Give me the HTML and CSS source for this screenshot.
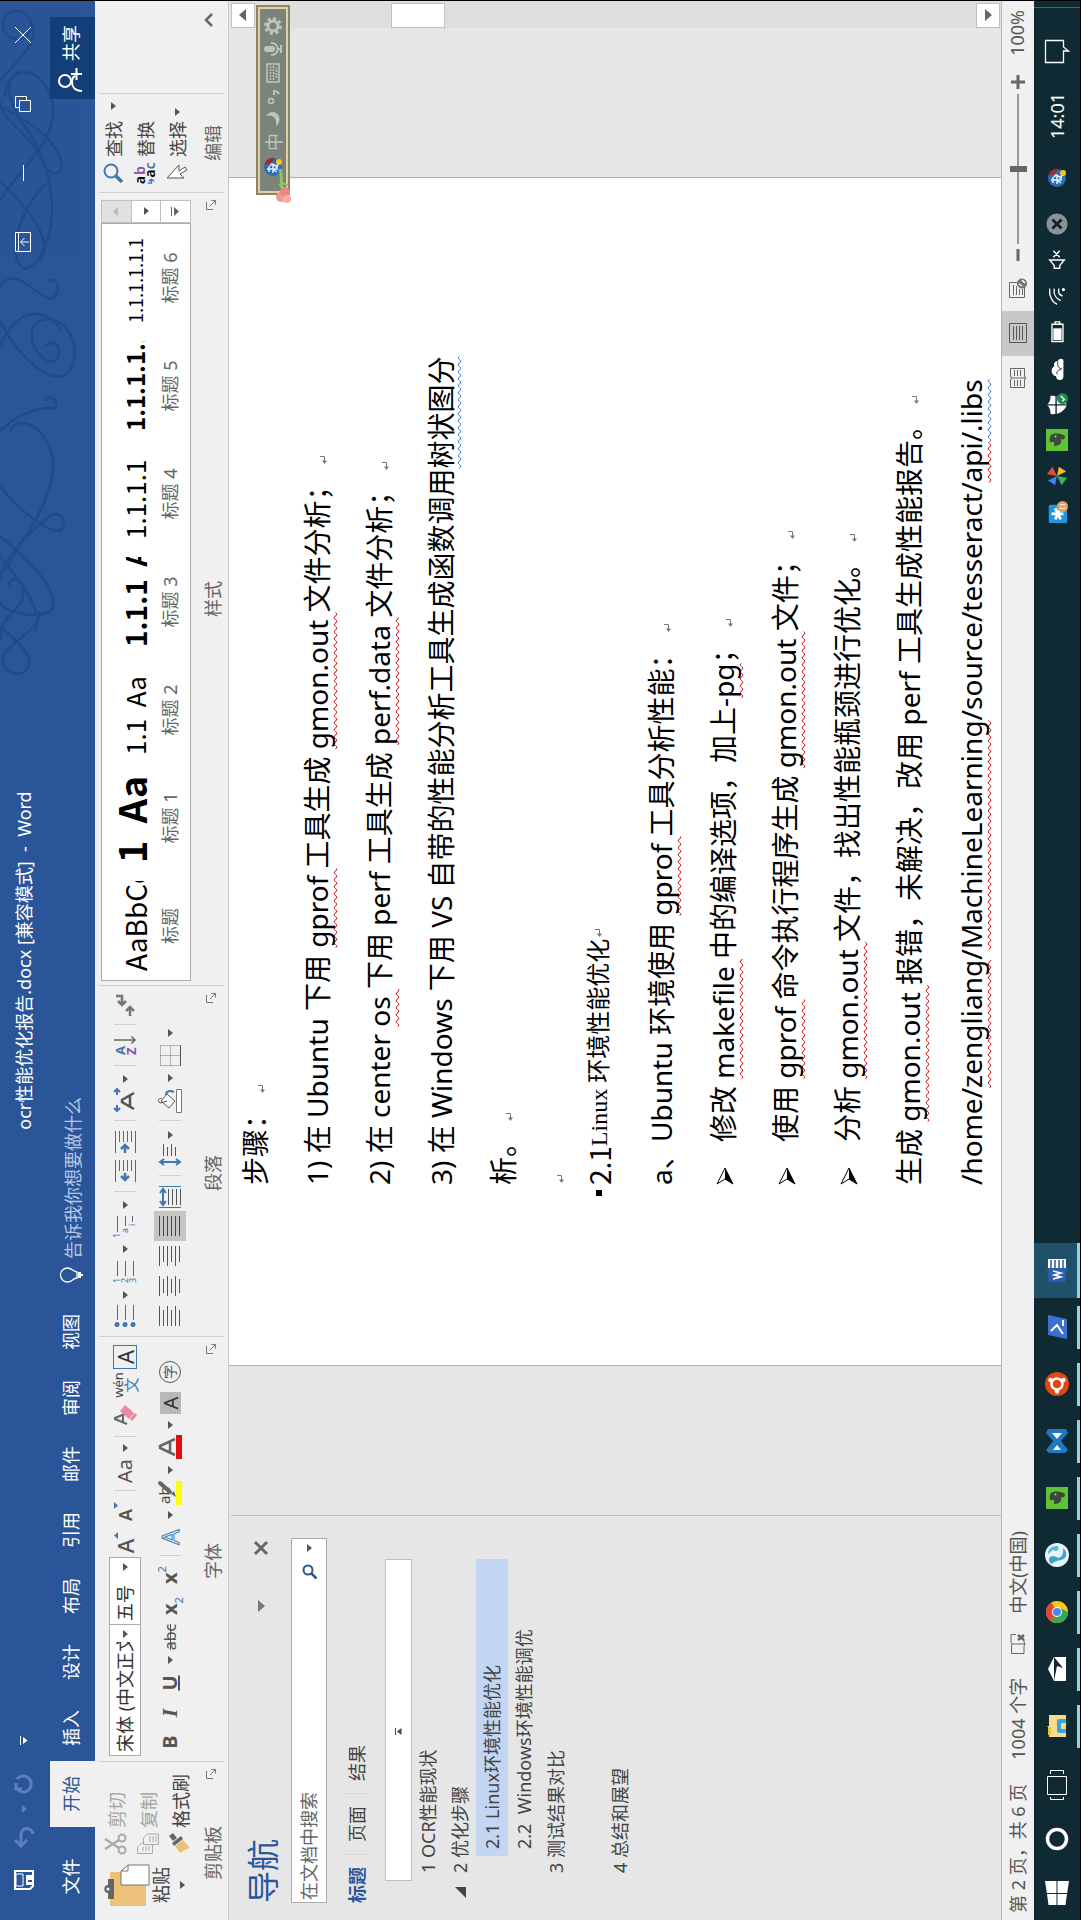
FILE: index.html
```html
<!DOCTYPE html>
<html lang="zh-CN">
<head>
<meta charset="utf-8">
<title>ocr性能优化报告.docx [兼容模式] - Word</title>
<link rel="stylesheet" href="styles.css">
</head>
<body>
<svg class="defs" aria-hidden="true">
  <symbol id="launch" viewBox="0 0 10 10"><path d="M.5 7V.5H8M4 4l5 5M9.500 5.500v4h-4" fill="none" stroke="#777"/></symbol>
  <symbol id="ret" viewBox="0 0 8 8"><path d="M7.500 0v4.500H2" fill="none" stroke="#777"/><path d="M0 4.500 3.500 2v5z" fill="#777"/></symbol>
  <symbol id="arrowhead" viewBox="0 0 18 18"><path d="M1 1 17 9 1 17 6 9z" fill="#fff" stroke="#000"/><path d="M6 9h11L1 17z"/></symbol>
  <symbol id="evernote" viewBox="0 0 22 22"><rect width="22" height="22" fill="#5fc33a"/><path d="M5 8h4V4c3-1 8 0 8 3 1 5 0 10-2 12-3 0-4-1-3-4-4 1-7-1-7-7z" fill="#3b4a3b"/><circle cx="14.500" cy="9.500" r="1" fill="#9fdc80"/></symbol>
  <symbol id="sogou" viewBox="0 0 20 20"><circle cx="10" cy="10" r="9" fill="#2d6db5"/><path d="M12 2c5 0 8 5 7 9l-4-2z" fill="#b3202a"/><circle cx="15" cy="16" r="3" fill="#f4c61c"/><path d="M5 6h6M8 4v11M4 10h8M5 14l2-3M11 7l2 2-3 6M9 13l4 2" stroke="#e4f2ff" fill="none" stroke-width="1.500"/></symbol>
</svg>
<div class="screen">
  <header class="titlebar">
    <svg class="swirls" viewBox="0 0 680 95" aria-hidden="true">
      <g transform="matrix(0 1 -1 0 680 0)" fill="none" stroke="#1f4783" stroke-width="2.500" opacity=".75">
        <circle cx="17" cy="24" r="14"/>
        <path d="M28 15C45 40 20 55 0 80M5 95C8 62 40 62 52 100 60 140 20 165 0 200M0 105C30 120 60 140 62 165 60 180 45 170 42 160 30 130 0 120 0 100"/>
        <path d="M20 72C5 75 5 100 25 125 50 160 60 210 45 245 35 270 20 275 16 255 14 225 30 195 50 180"/>
        <path d="M0 180C30 210 55 240 40 260M0 285C15 265 30 290 50 298 62 295 60 275 48 280M0 320C15 350 50 390 70 370 85 340 60 310 40 320 20 330 40 365 55 360 65 350 55 335 45 345"/>
        <path d="M0 430C20 410 45 405 55 408 60 400 50 392 45 400M10 430C20 410 50 430 53 460 55 500 20 540 5 570M0 345C20 300 50 310 62 330"/>
        <path d="M0 485C20 510 45 530 60 530 68 522 62 508 50 515 30 530 0 560 0 580M0 535C30 560 60 590 52 608 45 620 0 612 0 600"/>
        <path d="M0 555C20 580 45 610 35 630M8 585C15 570 28 580 22 600 10 615 0 620 0 640M0 625C10 635 32 650 29 665 22 680 0 672 3 655 10 640 40 630 40 610"/>
      </g>
    </svg>
    <div class="quick">
      <button class="tb save" aria-label="保存"><svg width="20" height="20" viewBox="0 0 20 20"><path d="M1 1h18v18H4l-3-3z" fill="none" stroke="#fff" stroke-width="2"/><path d="M4 2h12v7H4z" fill="#2a5699" stroke="#fff"/><path d="M5 12h10v7H5z" fill="#fff"/><path d="M8 14h2v4H8z" fill="#2a5699"/></svg></button>
      <button class="tb undo" aria-label="撤消"><svg width="22" height="20" viewBox="0 0 22 20"><path d="M8 1 2 7l6 6M2 7h11c8 0 9 10 1 12" fill="none" stroke="#5c80bb" stroke-width="3"/></svg></button>
      <i class="caret dim"></i>
      <button class="tb redo" aria-label="重做"><svg width="20" height="20" viewBox="0 0 20 20"><path d="M4 3a8 8 0 1 0 10 0M4 8V2h6" fill="none" stroke="#5c80bb" stroke-width="3"/></svg></button>
      <button class="tb" aria-label="自定义"><svg width="9" height="8" viewBox="0 0 9 8"><path d="M0 .5h9" stroke="#fff"/><path d="M1 3h7L4.500 7.500z" fill="#fff"/></svg></button>
    </div>
    <h1 class="doc-title">ocr性能优化报告.docx [兼容模式]&nbsp; -&nbsp; Word</h1>
    <div class="winbtns">
      <button class="wb" aria-label="功能区显示选项"><svg width="20" height="16" viewBox="0 0 20 16" fill="none" stroke="#fff"><path d="M.5.500h19v15H.5zM.5 3.500h19M10 14V6M6 9.500 10 5.500l4 4"/></svg></button>
      <button class="wb" aria-label="最小化"><svg width="16" height="16" viewBox="0 0 16 16"><path d="M0 8.500h16" stroke="#fff"/></svg></button>
      <button class="wb" aria-label="还原"><svg width="16" height="16" viewBox="0 0 16 16" fill="none" stroke="#fff"><path d="M.5 4.500h11v11H.5zM4.500 4V.500h11v11H12"/></svg></button>
      <button class="wb" aria-label="关闭"><svg width="16" height="16" viewBox="0 0 16 16"><path d="m0 0 16 16M16 0 0 16" stroke="#fff"/></svg></button>
    </div>
  </header>
  <nav class="tabs">
    <button class="tab file">文件</button><button class="tab on">开始</button><button class="tab">插入</button><button class="tab">设计</button><button class="tab">布局</button><button class="tab">引用</button><button class="tab">邮件</button><button class="tab">审阅</button><button class="tab">视图</button>
    <button class="tell"><svg width="16" height="23" viewBox="0 0 16 23"><path d="M5 17c0-4-4-5-4-9.500a7 7 0 0 1 14 0C15 12 11 13 11 17z" fill="none" stroke="#fff" stroke-width="1.300"/><path d="M5 18h6v3H9v2H7v-2H5z" fill="#fff"/></svg>告诉我你想要做什么</button>
    <button class="share"><svg width="24" height="24" viewBox="0 0 24 24" fill="none" stroke="#fff" stroke-width="2"><circle cx="11" cy="7" r="6"/><path d="M1 24c0-7 4-10 9-10 3 0 5 1 6 3M18 13v11M12 18.500h12"/></svg>共享</button>
  </nav>

  <div class="ribbon">
    <section class="group clip">
      <div class="clip-body">
        <button class="paste"><svg width="42" height="46" viewBox="0 0 42 46"><path d="M0 6h34v36H0z" fill="#ecc27b"/><path d="M7 10V4h6c0-5 8-5 8 0h6v6z" fill="#666"/><circle cx="17" cy="4" r="1.500" fill="#fff"/><path d="M21 17h14l6 7v21H21z" fill="#fff" stroke="#777"/><path d="M35 17v7h6" fill="none" stroke="#777"/></svg><span>粘贴</span><i class="caret"></i></button>
        <div class="clip-list">
          <button class="row off"><svg width="22" height="22" viewBox="0 0 22 22" fill="none" stroke="#aaa" stroke-width="2"><circle cx="5" cy="17" r="3.500"/><circle cx="17" cy="17" r="3.500"/><path d="m7 14 9-14M15 14 6 0" stroke-width="2.500"/></svg>剪切</button>
          <button class="row off"><svg width="22" height="22" viewBox="0 0 22 22" fill="#f0f0f0" stroke="#aaa"><path d="M1.500.5H8l4 4v11H1.500z"/><path d="M10.500 6.500H17l4 4v11H10.500zM13 13h6M13 16h6M13 19h6M4 6h4M4 9h5M4 12h5"/></svg>复制</button>
          <button class="row"><svg width="22" height="22" viewBox="0 0 22 22"><path d="m2 11 7-5 6 8-8 7c-1-4-3-7-5-10z" fill="#ecc27b"/><path d="m9 5 3-2 7 9-3 2zM14 4l5-4 3 4-5 4z" fill="#666"/></svg>格式刷</button>
        </div>
      </div>
      <footer class="gfoot"><span>剪贴板</span><svg class="launch"><use href="#launch"/></svg></footer>
    </section>

    <section class="group font">
      <div class="gbody">
        <div class="tools">
          <label class="combo name"><select aria-label="字体"><option>宋体 (中文正文)</option></select><i class="caret"></i></label>
          <label class="combo size"><select aria-label="字号"><option>五号</option></select><i class="caret"></i></label>
          <button class="t w30"><b class="gl a22">A</b><svg width="8" height="6"><path d="M0 5 3.500 1 7 5z" fill="#3f78b0"/></svg></button>
          <button class="t w32"><b class="gl a18">A</b><svg width="8" height="6"><path d="M0 1 3.500 5 7 1z" fill="#3f78b0"/></svg></button>
          <i class="sep w8"></i>
          <button class="t w32"><span class="gl a20">Aa</span></button><i class="caret w14"></i>
          <i class="sep w8"></i>
          <button class="t w36"><svg width="20" height="22" viewBox="0 0 20 22"><path d="m1 13 5-12h1l5 12M3 9h7" fill="none" stroke="#666" stroke-width="2"/><path d="m6 15 8-9 6 5-8 9z" fill="#e88aa0"/><path d="m5 17 6 5" stroke="#e88aa0" stroke-width="3"/></svg></button>
          <button class="t w24 pinyin"><span>wén</span><span class="blue">文</span></button>
          <button class="t w32"><span class="gl boxed">A</span></button>
        </div>
        <div class="tools">
          <button class="t w28"><b class="gl a20">B</b></button>
          <button class="t w30"><b class="gl ital">I</b></button>
          <button class="t w30"><b class="gl under">U</b></button><i class="caret w16"></i>
          <button class="t w30"><s class="gl abc">abc</s></button>
          <button class="t w32"><b class="gl a20">x</b><span class="mini low">2</span></button>
          <button class="t w30"><b class="gl a20">x</b><span class="mini high">2</span></button>
          <i class="sep w8"></i>
          <button class="t w30"><span class="gl outline">A</span></button><i class="caret w14"></i>
          <button class="t w30"><svg width="24" height="24" viewBox="0 0 24 24"><path d="M0 18h24v6H0z" fill="#ff0"/><text x="1" y="12" class="hl">ab</text><path d="m22 2-9 10" stroke="#666" stroke-width="4" stroke-linecap="round"/><path d="m11 13 3 3-6 2z" fill="#666"/></svg></button><i class="caret w16"></i>
          <button class="t w30"><svg width="24" height="24" viewBox="0 0 24 24"><path d="m4 17 7-15h2l7 15M7 12h10" fill="none" stroke="#666" stroke-width="2.500"/><path d="M0 18h24v6H0z" fill="#e01010"/></svg></button><i class="caret w14"></i>
          <button class="t w30"><span class="gl shade">A</span></button>
          <button class="t w32"><span class="gl ring">字</span></button>
        </div>
      </div>
      <footer class="gfoot"><span>字体</span><svg class="launch"><use href="#launch"/></svg></footer>
    </section>

    <section class="group para">
      <div class="gbody">
        <div class="tools">
          <button class="t w30"><svg width="22" height="22" viewBox="0 0 22 22"><g fill="#3f78b0"><circle cx="2.500" cy="3" r="2.500"/><circle cx="2.500" cy="11" r="2.500"/><circle cx="2.500" cy="19" r="2.500"/></g><path d="M7 3.500h15M7 11.500h15M7 19.500h15" stroke="#666"/></svg></button><i class="caret w12"></i>
          <button class="t w34"><svg width="22" height="22" viewBox="0 0 22 22"><g class="num"><text x="0" y="6">1</text><text x="0" y="14">2</text><text x="0" y="22">3</text></g><path d="M7 3.500h15M7 11.500h15M7 19.500h15" stroke="#666"/></svg></button><i class="caret w12"></i>
          <button class="t w32"><svg width="22" height="22" viewBox="0 0 22 22"><g class="num"><text x="0" y="6">1</text><text x="5" y="14">a</text><text x="12" y="21">i</text></g><path d="M6 3.500h16M12 11.500h10M16 18.500h6" stroke="#666"/></svg></button><i class="caret w12"></i>
          <i class="sep w14"></i>
          <button class="t w28"><svg width="22" height="22" viewBox="0 0 22 22"><path d="M0 1.500h22M11 5.500h11M11 9.500h11M11 13.500h11M11 17.500h11M0 21.500h22" stroke="#666"/><path d="M9 11H2M6 7l-4 4 4 4" fill="none" stroke="#3f78b0" stroke-width="2.500"/></svg></button>
          <button class="t w30"><svg width="22" height="22" viewBox="0 0 22 22"><path d="M0 1.500h22M11 5.500h11M11 9.500h11M11 13.500h11M11 17.500h11M0 21.500h22" stroke="#666"/><path d="M0 11h7M4 7l4 4-4 4" fill="none" stroke="#3f78b0" stroke-width="2.500"/></svg></button>
          <i class="sep w12"></i>
          <button class="t w30"><svg width="24" height="22" viewBox="0 0 24 22"><path d="M7 3H1M4 0 1 3l3 3M17 3h6M20 0l3 3-3 3" fill="none" stroke="#3f78b0" stroke-width="2"/><path d="m3 20 7-12h2l7 12M6 16h10" fill="none" stroke="#555" stroke-width="2.500"/></svg></button><i class="caret w12"></i>
          <i class="sep w14"></i>
          <button class="t w28"><svg width="20" height="22" viewBox="0 0 20 22"><text x="0" y="11" class="az" fill="#3f78b0">A</text><text x="0" y="22" class="az" fill="#8a4fa8">Z</text><path d="M15 0v21M11.500 17.500 15 21l3.500-3.500" fill="none" stroke="#666" stroke-width="1.500"/></svg></button>
          <i class="sep w12"></i>
          <button class="t w28"><svg width="22" height="20" viewBox="0 0 22 20" fill="none" stroke="#777" stroke-width="2.500"><path d="M20 1v6h-8M15 3l-4 4 4 4M0 15h9M5 11l4 4-4 4"/></svg></button>
        </div>
        <div class="tools">
          <button class="t w30"><svg width="20" height="22" viewBox="0 0 20 22"><path d="M0 .5h20M0 4.500h16M0 8.500h20M0 12.500h16M0 16.500h20M0 20.500h16" stroke="#555"/></svg></button>
          <button class="t w30"><svg width="20" height="22" viewBox="0 0 20 22"><path d="M0 .5h20M3 4.500h14M0 8.500h20M3 12.500h14M0 16.500h20M3 20.500h14" stroke="#555"/></svg></button>
          <button class="t w30"><svg width="20" height="22" viewBox="0 0 20 22"><path d="M0 .5h20M4 4.500h16M0 8.500h20M4 12.500h16M0 16.500h20M4 20.500h16" stroke="#555"/></svg></button>
          <button class="t w30 pressed"><svg width="20" height="22" viewBox="0 0 20 22"><path d="M0 .5h20M0 4.500h20M0 8.500h20M0 12.500h20M0 16.500h20M0 20.500h20" stroke="#444"/></svg></button>
          <button class="t w28"><svg width="22" height="22" viewBox="0 0 22 22"><path d="M.5 0v22M21.500 0v22" stroke="#3f78b0"/><path d="M3 9.500h16M3 13.500h16M3 17.500h16M3 21.500h16" stroke="#555"/><path d="M4 4h14M7 1 3 4l4 3M15 1l4 3-4 3" fill="none" stroke="#3f78b0" stroke-width="2"/></svg></button>
          <i class="sep w14"></i>
          <button class="t w28"><svg width="22" height="22" viewBox="0 0 22 22"><path d="M4 2v18M1 5l3-4 3 4M1 17l3 4 3-4" fill="none" stroke="#3f78b0" stroke-width="2"/><path d="M10 4.500h12M10 8.500h9M10 12.500h12M10 16.500h9" stroke="#555"/></svg></button><i class="caret w12"></i>
          <i class="sep w16"></i>
          <button class="t w24"><svg width="24" height="24" viewBox="0 0 24 24"><path d="M.5 18.500h23v5H.5z" fill="#fff" stroke="#777"/><path d="m5 11 7-8 7 6-7 8zM12 9 10 2c2-3 6-1 4 2" fill="#fff" stroke="#555"/><path d="M18 8c4 0 5 4 3 8" fill="none" stroke="#3f78b0" stroke-width="2"/></svg></button><i class="caret w22"></i>
          <button class="t w22"><svg width="21" height="21" viewBox="0 0 21 21"><path d="M.5.500h20v20M.5.500v20M10.500.500v20M.5 10.500h20" fill="none" stroke="#777" stroke-dasharray="1 1"/><path d="M0 20.500h21" stroke="#555"/></svg></button><i class="caret w24"></i>
        </div>
      </div>
      <footer class="gfoot"><span>段落</span><svg class="launch"><use href="#launch"/></svg></footer>
    </section>

    <section class="group styles">
      <div class="gallery">
        <div class="cells">
          <button class="cell"><span class="smp s28">AaBbCc</span><span>标题</span></button>
          <button class="cell"><b class="smp s38">1&nbsp; Aa</b><span>标题 1</span></button>
          <button class="cell"><span class="smp s26">1.1&nbsp; Aa</span><span>标题 2</span></button>
          <button class="cell"><b class="smp s28">1.1.1&nbsp; A</b><span>标题 3</span></button>
          <button class="cell"><span class="smp s26">1.1.1.1</span><span>标题 4</span></button>
          <button class="cell"><b class="smp s24">1.1.1.1.1</b><span>标题 5</span></button>
          <button class="cell"><span class="smp s18">1.1.1.1.1.1</span><span>标题 6</span></button>
        </div>
        <div class="gscroll">
          <button class="gs dis" aria-label="上"><svg width="9" height="6"><path d="M0 5h9L4.500 0z" fill="#bbb"/></svg></button>
          <button class="gs" aria-label="下"><i class="caret"></i></button>
          <button class="gs" aria-label="更多"><svg width="9" height="9"><path d="M0 .5h9" stroke="#666"/><path d="M0 3h9L4.500 8z" fill="#666"/></svg></button>
        </div>
      </div>
      <footer class="gfoot"><span>样式</span><svg class="launch"><use href="#launch"/></svg></footer>
    </section>

    <section class="group edit">
      <div class="edit-list">
        <button class="row"><svg width="22" height="22" viewBox="0 0 22 22" fill="none" stroke="#3f78b0"><circle cx="13" cy="9" r="6.500" stroke-width="2"/><path d="m8 14-6 6" stroke-width="3.500"/></svg>查找<i class="caret far"></i></button>
        <button class="row"><svg width="24" height="24" viewBox="0 0 24 24"><text x="0" y="12" class="rp">a</text><text x="10" y="12" class="rp" fill="#8a4fa8">b</text><text x="7" y="23" class="rp">a</text><text x="16" y="23" class="rp" fill="#3f78b0">c</text><path d="M1 15v4h4M3 16l2 3-2 3" fill="none" stroke="#3f78b0" stroke-width="1.500"/></svg>替换</button>
        <button class="row"><svg width="22" height="22" viewBox="0 0 22 22"><path d="M6 1v17l4-4 4 7 3-2-4-6h6z" fill="#fff" stroke="#555"/></svg>选择<i class="caret"></i></button>
      </div>
      <footer class="gfoot"><span>编辑</span></footer>
    </section>
    <div class="rest"><button class="t" aria-label="折叠功能区"><svg width="14" height="9" viewBox="0 0 14 9"><path d="m1 8 6-6 6 6" fill="none" stroke="#666" stroke-width="2.500"/></svg></button></div>
  </div>

  <div class="work">
    <aside class="nav">
      <header class="nav-head"><h2>导航</h2><i class="caret big"></i><button class="t" aria-label="关闭"><svg width="14" height="14" viewBox="0 0 14 14"><path d="m1 1 12 12M13 1 1 13" stroke="#666" stroke-width="3"/></svg></button></header>
      <label class="search"><input type="text" placeholder="在文档中搜索" aria-label="在文档中搜索"><svg width="15" height="15" viewBox="0 0 15 15" fill="none" stroke="#2a5699"><circle cx="9" cy="6" r="4.500" stroke-width="2"/><path d="m5.500 9.500-5 5" stroke-width="2.500"/></svg><i class="caret"></i></label>
      <div class="nav-tabs"><button class="on">标题</button><button>页面</button><button>结果</button></div>
      <button class="jump" aria-label="跳转到文档开头"><svg width="7" height="7"><path d="M0 .5h7" stroke="#444"/><path d="M0 6.500h7L3.500 2z" fill="#444"/></svg></button>
      <ul class="tree">
        <li><a href="#a">1 OCR性能现状</a></li>
        <li class="open"><svg width="11" height="11"><path d="M11 0v11H0z" fill="#444"/></svg><a href="#a">2 优化步骤</a></li>
        <li class="sub sel"><a href="#a">2.1 Linux环境性能优化</a></li>
        <li class="sub"><a href="#a">2.2&nbsp; Windows环境性能调优</a></li>
        <li><a href="#a">3 测试结果对比</a></li>
        <li></li>
        <li><a href="#a">4 总结和展望</a></li>
      </ul>
    </aside>
    <main class="canvas">
      <article class="page">
        <p>步骤<span class="pu">：</span><svg class="ret"><use href="#ret"/></svg></p>
        <p>1) 在 Ubuntu 下用 <u>gprof </u>工具生成 <u>gmon.out </u>文件分析<span class="pu">；</span><svg class="ret"><use href="#ret"/></svg></p>
        <p>2) 在 center <u>os </u>下用 perf 工具生成 <u>perf.data </u>文件分析<span class="pu">；</span><svg class="ret"><use href="#ret"/></svg></p>
        <p>3) 在 Windows 下用 VS 自带的性能分析工具生成函数调用<u class="gr">树状图分</u></p>
        <p>析。<svg class="ret"><use href="#ret"/></svg></p>
        <p class="blank"><svg class="ret"><use href="#ret"/></svg></p>
        <h3 id="a"><i class="dot"></i><span class="hn">2.1</span>Linux 环境性能优化<svg class="ret"><use href="#ret"/></svg></h3>
        <p><span class="mk">a、</span>Ubuntu 环境使用 <u>gprof </u>工具分析性能<span class="pu">：</span><svg class="ret"><use href="#ret"/></svg></p>
        <p><span class="mk"><svg width="18" height="18"><use href="#arrowhead"/></svg></span>修改 <u>makefile </u>中的编译选项<span class="pc">，</span>加上-<u>pg</u><span class="pu">；</span><svg class="ret"><use href="#ret"/></svg></p>
        <p><span class="mk"><svg width="18" height="18"><use href="#arrowhead"/></svg></span>使用 <u>gprof </u>命令执行程序生成 <u>gmon.out </u>文件<span class="pu">；</span><svg class="ret"><use href="#ret"/></svg></p>
        <p><span class="mk"><svg width="18" height="18"><use href="#arrowhead"/></svg></span>分析 <u>gmon.out </u>文件<span class="pc">，</span>找出性能瓶颈进行优化。<svg class="ret"><use href="#ret"/></svg></p>
        <p>生成 <u>gmon.out </u>报错<span class="pc">，</span>未解决<span class="pc">，</span>改用 perf 工具生成性能报告。<svg class="ret"><use href="#ret"/></svg></p>
        <p>/home/<u>zengliang</u>/<u>MachineLearning</u>/source/tesseract/<u>api</u><u class="gr">/.libs</u></p>
      </article>
    </main>
    <div class="vscroll">
      <button aria-label="向上滚动"><svg width="12" height="8"><path d="M0 7h12L6 0z" fill="#666"/></svg></button>
      <i class="thumb"></i>
      <button aria-label="向下滚动"><svg width="12" height="8"><path d="M0 1h12L6 8z" fill="#666"/></svg></button>
    </div>
    <div class="ime">
      <svg width="20" height="20"><use href="#sogou"/></svg>
      <span>中</span>
      <svg width="16" height="16" viewBox="0 0 16 16"><path d="M11 1c2 7-2 11-10 10 3 5 13 5 14-3 0-3-2-6-4-7z" fill="#bfc5bd"/></svg>
      <svg width="16" height="16" viewBox="0 0 16 16"><circle cx="4" cy="6" r="2.500" fill="none" stroke="#bfc5bd" stroke-width="1.500"/><path d="M10 9h4c0 3-1 4-3 5" fill="none" stroke="#bfc5bd" stroke-width="2"/></svg>
      <svg width="20" height="14" viewBox="0 0 20 14"><path d="M1 1h18v12H1z" fill="none" stroke="#bfc5bd" stroke-width="1.500"/><path d="M3 4.500h14M3 7.500h14M5 10.500h10" stroke="#bfc5bd" stroke-width="1.500" stroke-dasharray="2 1"/></svg>
      <svg width="16" height="18" viewBox="0 0 16 18"><rect x="5" width="6" height="11" rx="3" fill="#bfc5bd"/><path d="M2 7c0 9 12 9 12 0M8 14v3M4 17h8" fill="none" stroke="#bfc5bd" stroke-width="2"/></svg>
      <svg width="18" height="18" viewBox="0 0 18 18"><circle cx="9" cy="9" r="5" fill="none" stroke="#bfc5bd" stroke-width="3"/><circle cx="9" cy="9" r="7.500" fill="none" stroke="#bfc5bd" stroke-width="3" stroke-dasharray="3 2.900"/></svg>
      <svg class="flower" width="34" height="18" viewBox="0 0 34 18"><path d="M12 8c6-3 12 0 22-3" fill="none" stroke="#8cc46a" stroke-width="3"/><path d="m14 10 5-6M18 13l2-6" stroke="#8cc46a" stroke-width="2"/><circle cx="6" cy="6" r="5" fill="#ef9a90"/><circle cx="11" cy="10" r="5" fill="#e98880"/><circle cx="4" cy="12" r="4" fill="#f4aca4"/></svg>
    </div>
  </div>

  <footer class="status">
    <span class="pg">第 2 页<span class="pc">，</span>共 6 页</span><span class="wc">1004 个字</span>
    <svg class="book" width="20" height="18" viewBox="0 0 20 18" fill="none" stroke="#666"><path d="M10 3v13l-2-1H.5V2.500H8zM10 3l2-1h7.500v5M10 16l2-1h2"/><path d="m14 9 5 6M19 9l-5 6" stroke-width="2.500"/></svg>
    <span>中文(中国)</span>
    <div class="views">
      <button aria-label="阅读视图"><svg width="20" height="18" viewBox="0 0 20 18" fill="none" stroke="#666"><path d="M.5 1.500H8l2 1 2-1h7.500v14H12l-2 1-2-1H.5zM10 2v15M2 5.500h6M2 8.500h6M2 11.500h6M12 5.500h6M12 8.500h6M12 11.500h6"/></svg></button>
      <button class="cur" aria-label="页面视图"><svg width="20" height="18" viewBox="0 0 20 18" fill="none" stroke="#555"><path d="M.5.500h19v17H.5zM3 4.500h14M3 7.500h14M3 10.500h14M3 13.500h14"/></svg></button>
      <button aria-label="Web 版式视图"><svg width="20" height="18" viewBox="0 0 20 18" fill="none" stroke="#666"><path d="M12 15.500H.5V.500h15V8M3 4.500h10M3 7.500h9M3 10.500h6M3 13.500h6"/><circle cx="14.500" cy="13" r="4.500" fill="#777"/><path d="m12 13 2-3M15 16l3-3" stroke="#fff" stroke-width="1.500"/></svg></button>
    </div>
    <button class="zb" aria-label="缩小"><svg width="12" height="4"><path d="M0 2h12" stroke="#666" stroke-width="3"/></svg></button>
    <input type="range" class="zoom" min="0" max="100" value="50" aria-label="缩放">
    <button class="zb" aria-label="放大"><svg width="14" height="14"><path d="M0 7h14M7 0v14" stroke="#666" stroke-width="3"/></svg></button>
    <span class="pct">100%</span>
  </footer>

  <footer class="taskbar">
    <button class="k"><svg width="24" height="24" viewBox="0 0 24 24" fill="#fff"><path d="M0 3.500 11 2v9.500H0zM12 1.800 24 0v11.500H12zM0 12.500h11V22L0 20.500zM12 12.500h12V24l-12-1.800z"/></svg></button>
    <button class="k"><svg width="24" height="24"><circle cx="12" cy="12" r="9.500" fill="none" stroke="#fff" stroke-width="3.500"/></svg></button>
    <button class="k"><svg width="30" height="20" viewBox="0 0 30 20" fill="none" stroke="#fff"><path d="M5.500.500h18v19h-18zM3 3.500H.5v13H3M26 3.500h3.500v13H26"/></svg></button>
    <div class="apps">
      <button class="app"><svg width="22" height="20" viewBox="0 0 22 20"><path d="M0 2h9l2-2h0v2h11v17H0z" fill="#f6dc8c"/><path d="M2 1h8v3H2z" fill="#e9c23f"/><path d="M4 19v-7q0-2 2-2h10q2 0 2 2v7h-4v-5H8v5z" fill="#3ea6dc"/></svg></button>
      <button class="app"><svg width="24" height="20" viewBox="0 0 24 20"><path d="M0 7 12 1l12 6v12H0z" fill="#fff"/><path d="M0 7h24l-11 9 2-6z" fill="#10262f"/></svg></button>
      <button class="app"><svg width="22" height="22" viewBox="0 0 22 22"><circle cx="11" cy="11" r="11" fill="#f7c920"/><path d="M11 11 1.500 5.500A11 11 0 0 1 20.500 5.500z" fill="#e2453a"/><path d="M11 0a11 11 0 0 1 9.500 6H11z" fill="#e2453a"/><path d="M1.500 5.500A11 11 0 0 0 11 22l4-8-4-3z" fill="#36a852"/><circle cx="11" cy="11" r="5" fill="#fff"/><circle cx="11" cy="11" r="4" fill="#4d88ee"/></svg></button>
      <button class="app"><svg width="24" height="24" viewBox="0 0 24 24"><circle cx="12" cy="12" r="12" fill="#e7f5fa"/><path d="M3 6c5-5 10 0 7 5s3 8 9 7c-4 5-11 4-12-2s-2-6-4-10z" fill="#3aa5c8"/><path d="M13 3c6 0 8 4 8 10-4 2-6-2-4-5-1-2-3-3-4-5z" fill="#5bb8d6"/></svg></button>
      <button class="app"><svg width="22" height="22"><use href="#evernote"/></svg></button>
      <button class="app"><svg width="24" height="22" viewBox="0 0 24 22"><path d="m3 0 9 7 8-7 4 2v18l-4 2-8-7-9 7-3-3V3z" fill="#2078c4"/><path d="m3 7 5 4-5 4zM20 6v10l-6-5z" fill="#fff"/></svg></button>
      <button class="app"><svg width="24" height="24" viewBox="0 0 24 24"><circle cx="12" cy="12" r="12" fill="#dd4814"/><circle cx="12" cy="12" r="5.500" fill="none" stroke="#fff" stroke-width="2.500"/><circle cx="4.500" cy="12" r="2.200" fill="#fff"/><circle cx="16" cy="5.500" r="2.200" fill="#fff"/><circle cx="16" cy="18.500" r="2.200" fill="#fff"/></svg></button>
      <button class="app"><svg width="24" height="19" viewBox="0 0 24 19"><path d="M4 0h20l-4 19H0z" fill="#3c6fd0"/><path d="m8 3 6 6-9 6M13 15h6" fill="none" stroke="#fff" stroke-width="2"/></svg></button>
      <button class="app act"><svg width="24" height="20" viewBox="0 0 24 20"><path d="M14 1h9v18h-9z" fill="#fff"/><path d="M14 4h8M14 8h8M14 12h8M14 16h8" stroke="#2b579a" stroke-width="1.500"/><path d="M0 2 14 0v20L0 18z" fill="#2b5db0"/><path d="m3 6 2 8 2-7 2 7 2-8" fill="none" stroke="#fff" stroke-width="1.500"/></svg></button>
    </div>
    <div class="tray">
      <svg viewBox="0 0 24 24"><rect y="3" width="20" height="20" rx="2" fill="#1e96e6"/><path d="M10 6v13M4 10l12 6M16 10 4 16" stroke="#fff" stroke-width="3"/><circle cx="18" cy="18" r="6" fill="#f0a050"/><path d="M16 15v6M20 15v6" stroke="#fff"/></svg>
      <svg viewBox="0 0 24 24"><path d="m12 12-10-2 5-8z" fill="#3f7fe8"/><path d="m12 12 2-11 8 6z" fill="#e34b3d"/><path d="m12 12 10 2-5 8z" fill="#f2b92c"/><path d="m12 12-2 11-8-6z" fill="#3fae58"/></svg>
      <svg viewBox="0 0 22 22"><use href="#evernote"/></svg>
      <svg viewBox="0 0 24 24"><path d="M1 5q7 0 10-4 3 4 10 4 1 13-10 18Q0 18 1 5z" fill="#fff"/><path d="M11 1v22M1 11h20" stroke="#10262f" stroke-width="1.500"/><circle cx="18" cy="18" r="6" fill="#1e8a4c"/><path d="m15 18 2 2 4-4" fill="none" stroke="#fff" stroke-width="1.500"/></svg>
      <svg viewBox="0 0 24 24"><path d="M3 19a4 4 0 0 1 0-8c1-5 8-7 11-2 4-1 6 2 5 4 4 0 4 6 1 6z" fill="#fff"/><path d="M5 12c4-1 5 3 6 5 1-4 5-5 8-4" fill="none" stroke="#10262f"/></svg>
      <svg viewBox="0 0 24 24"><path d="M1.500 6.500h19v12h-19zM21 10h2v5h-2" fill="none" stroke="#fff" stroke-width="1.500"/><path d="M3 8h13v9H3z" fill="#fff"/></svg>
      <svg viewBox="0 0 24 24" fill="none" stroke="#fff" stroke-width="1.500"><path d="M3 12C5 7 12 3 20 4M7 16c2-5 7-8 13-7M12 18c1-3 4-5 8-4"/><circle cx="19" cy="19" r="1" fill="#fff"/></svg>
      <svg viewBox="0 0 24 24" fill="none" stroke="#fff" stroke-width="1.500"><path d="M3 9h3l6-5v16l-6-5H3zM15 8l7 7M22 8l-7 7"/></svg>
      <svg viewBox="0 0 24 24"><circle cx="12" cy="12" r="11.500" fill="#8a9396"/><path d="m7 7 10 10M17 7 7 17" stroke="#10262f" stroke-width="3"/></svg>
    </div>
    <svg class="sg" width="20" height="20"><use href="#sogou"/></svg>
    <time>14:01</time>
    <svg class="note" width="24" height="24" viewBox="0 0 24 24"><path d="M.5.500h22v18H16l-4 5v-5H.5z" fill="none" stroke="#fff" stroke-width="1.300"/></svg>
  </footer>
</div>
</body>
</html>
```
FILE: styles.css
```css
* { box-sizing: border-box; }

html { overflow: hidden; }

body {
  margin: 0;
  width: 100vw;
  height: 100vh;
  overflow: hidden;
  font-family: "Noto Sans", "Noto Sans CJK SC", sans-serif;
  font-size: 18px;
  color: #444;
}

.defs { position: absolute; width: 0; height: 0; }

h1, h2, h3, p, ul { margin: 0; padding: 0; font-weight: 400; }
ul { list-style: none; }
a { color: inherit; text-decoration: none; }
button, input, select { font: inherit; color: inherit; }
button { border: 0; padding: 0; background: none; white-space: nowrap; }
svg { flex: none; display: block; overflow: visible; }

/* The desktop is shown turned a quarter to the left. */
.screen {
  width: 100vh;
  height: 100vw;
  transform-origin: 0 0;
  transform: translateY(100vh) rotate(-90deg);
  display: flex;
  flex-direction: column;
  background: #e6e6e6;
  border-right: 1px solid #000;
  border-bottom: 1px solid #000;
  overflow: hidden;
}

/* Title bar */
.titlebar {
  position: relative;
  height: 50px;
  background: #2a5699;
  color: #fff;
  display: grid;
  grid-template-columns: 1fr auto 1fr;
  align-items: start;
}
.swirls { position: absolute; right: 0; top: 0; width: 680px; height: 95px; pointer-events: none; overflow: hidden; }
.quick { display: flex; align-items: center; padding-left: 30px; height: 48px; }
.save { margin-right: 22px; }
.undo { margin-right: 12px; }
.redo { margin: 0 28px 0 12px; }
.doc-title { font-size: 18px; line-height: 48px; position: relative; }
.winbtns { display: flex; justify-content: flex-end; position: relative; height: 46px; }
.wb { width: 69px; display: grid; place-items: center; }

/* Ribbon tabs */
.tabs { height: 45px; background: #2a5699; color: #fff; display: flex; }
.tab { width: 66px; padding-bottom: 6px; }
.tab.file { width: 93px; padding-right: 6px; }
.tab.on { background: #f0f0f0; color: #2a5699; }
.tell { display: flex; align-items: center; gap: 8px; margin-left: 16px; padding-bottom: 2px; color: #b4c6e4; }
.share {
  position: relative;
  width: 82px;
  margin: 0 16px 0 auto;
  background: #123f78;
  display: flex;
  align-items: center;
  gap: 7px;
  padding: 0 0 5px 7px;
}

/* Ribbon */
.ribbon { height: 134px; background: #f0f0f0; border-bottom: 1px solid #c8c8c8; display: flex; padding: 4px 0; }
.group { border-right: 1px solid #d0d0d0; height: 125px; display: flex; flex-direction: column; }
.clip { width: 159px; }
.font { width: 425px; }
.para { width: 351px; }
.styles { flex: 1; padding: 2px 7px 0 4px; }
.edit { width: 99px; }
.rest { width: 92px; display: flex; align-items: flex-end; justify-content: flex-end; padding: 0 12px 0 0; }
.gfoot { margin-top: auto; height: 22px; display: flex; align-items: center; color: #666; line-height: 20px; }
.gfoot span { flex: 1; text-align: center; }
.launch { width: 10px; height: 10px; margin: 0 7px 4px; }
.styles .launch { margin: 0 0 4px 7px; }

.caret { display: grid; place-items: center; flex: none; width: 9px; }
.caret::before {
  content: "";
  border: 4px solid transparent;
  border-top: 5px solid #555;
  border-bottom: 0;
}
.caret.dim::before { border-top-color: #5c80bb; }
.caret.big::before { border-width: 7px 6px 0; border-top-color: #777; }

.clip-body { display: flex; padding: 1px 0 0 14px; }
.paste { display: flex; flex-direction: column; align-items: center; width: 42px; line-height: 26px; padding-top: 4px; }
.paste svg { margin-bottom: -2px; }
.paste .caret { margin-top: 6px; }
.clip-list { margin-left: 9px; }
.row { display: flex; align-items: center; gap: 5px; height: 32px; }
.off { color: #a6a6a6; }
.edit-list { padding-left: 7px; margin-top: -2px; }
.edit-list .row { gap: 4px; }
.edit-list svg { width: 24px; height: 22px; }
.far { margin-left: 6px; }

.gbody { padding: 10px 0 0 5px; display: grid; gap: 13px; }
.tools { display: flex; height: 32px; align-items: center; }
.t { display: flex; justify-content: center; align-items: center; height: 32px; }
.sep { display: flex; justify-content: center; height: 22px; }
.sep::before { content: ""; width: 1px; background: #d0d0d0; }
.w8 { width: 8px; } .w12 { width: 12px; } .w14 { width: 14px; } .w16 { width: 16px; }
.w22 { width: 22px; } .w24 { width: 24px; } .w28 { width: 28px; } .w30 { width: 30px; }
.w32 { width: 32px; } .w34 { width: 34px; } .w36 { width: 36px; }
.pressed { background: #c5c5c5; }

.combo { display: flex; height: 32px; background: #fff; border: 1px solid #ababab; align-items: center; padding: 0 5px 0 3px; }
.combo select { appearance: none; border: 0; padding: 0; background: none; flex: 1; min-width: 0; outline: 0; color: #333; }
.name { width: 132px; margin-right: -1px; }
.name .caret { margin-left: 3px; }
.size { width: 68px; }

.gl { font-family: "Noto Sans", "Noto Sans CJK SC", sans-serif; color: #555; line-height: 24px; }
.a22 { font-size: 22px; font-weight: 500; }
.a20 { font-size: 20px; }
.a18 { font-size: 18px; font-weight: 600; }
.t > .gl + svg { align-self: flex-start; margin-top: 4px; }
.pinyin { flex-direction: column; font-size: 13px; line-height: 11px; }
.blue { color: #3f78b0; font-size: 15px; line-height: 14px; }
.boxed { border: 1px solid #3f78b0; width: 24px; height: 24px; font-size: 22px; line-height: 22px; color: #333; text-align: center; }
.ital { font: italic 700 22px/24px "Liberation Serif", serif; }
.under { text-decoration: underline; font-size: 20px; }
.abc { font-size: 16px; }
.mini { font-size: 11px; color: #3f78b0; }
.low { align-self: flex-end; }
.high { align-self: flex-start; }
.outline { font-size: 24px; color: #fff; -webkit-text-stroke: 1px #3f78b0; }
.shade { background: #b8b8b8; width: 22px; height: 21px; font-size: 20px; line-height: 21px; text-align: center; color: #333; }
.ring { border: 1px solid #555; border-radius: 50%; width: 22px; height: 22px; font-size: 14px; line-height: 20px; text-align: center; }
.hl { font: 15px "Noto Sans", sans-serif; fill: #444; }
.num { font: 9px "Noto Sans", sans-serif; fill: #3f78b0; }
.az { font: 700 13px "Noto Sans", sans-serif; }
.rp { font: 600 15px "Noto Sans", sans-serif; }

.gallery { display: flex; height: 90px; }
.cells { flex: 1; display: grid; grid-template-columns: repeat(7, 1fr); background: #fff; border: 1px solid #ababab; }
.cell { min-width: 0; overflow: hidden; padding: 0 9px; display: flex; flex-direction: column; align-items: center; line-height: 28px; color: #666; }
.smp { align-self: stretch; height: 54px; line-height: 66px; overflow: hidden; text-align: left; color: #000; font-family: "Noto Sans CJK SC", sans-serif; }
.s38 { font-size: 38px; line-height: 58px; }
.s28 { font-size: 28px; }
.s26 { font-size: 26px; }
.s24 { font-size: 24px; }
.s18 { font-size: 18px; }
.gscroll { width: 23px; display: flex; flex-direction: column; }
.gs { flex: 1; background: #fff; border: 1px solid #c0c0c0; display: grid; place-items: center; }
.gs + .gs { border-top: 0; }
.dis { background: #e1e1e1; }

/* Work area */
.work { position: relative; flex: 1; min-height: 0; display: flex; padding-top: 2px; }
.nav { width: 405px; border-right: 1px solid #c0c0c0; padding: 0 22px 0 17px; }
.nav-head { display: flex; align-items: center; height: 60px; padding-right: 3px; }
.nav-head h2 { flex: 1; font-size: 32px; color: #2a5699; }
.nav-head .caret { margin-right: 48px; }
.search { display: flex; align-items: center; height: 36px; background: #fff; border: 1px solid #ababab; padding: 0 5px 0 2px; gap: 11px; }
.search input { flex: 1; min-width: 0; border: 0; padding: 0; background: none; outline: 0; }
.search input::placeholder { color: #666; }
.nav-tabs { display: flex; height: 58px; align-items: center; padding-top: 2px; }
.nav-tabs button { width: 61px; text-align: left; padding-left: 12px; line-height: 26px; border-right: 1px solid #dadada; }
.nav-tabs button:first-child { width: 49px; padding-left: 0; }
.nav-tabs button:last-child { border: 0; }
.nav-tabs .on { color: #2a5699; font-weight: 700; }
.jump { display: grid; place-items: center; width: 322px; height: 27px; margin-left: 22px; background: #fff; border: 1px solid #c0c0c0; padding-right: 24px; }
.tree li { height: 32px; line-height: 30px; margin-left: 5px; padding-left: 25px; display: flex; align-items: center; }
.tree .open { padding-left: 0; gap: 14px; }
.tree .sub { margin-left: 47px; padding-left: 7px; margin-right: 21px; white-space: nowrap; }
.tree .sel { background: #c2d5f2; }

.canvas { flex: 1; min-width: 0; overflow: hidden; padding: 0 149px; margin-top: -2px; }
.page { display: flow-root; height: 100%; background: #fff; border: solid #b0b0b0; border-width: 0 1px; padding-left: 180px; color: #000; font: 28px/62px "Noto Sans", "Noto Sans CJK SC", sans-serif; white-space: nowrap; }
.page p { height: 62px; }
.page p:first-child { margin-top: -5px; }
.page .blank { height: 40px; line-height: 40px; }
.page h3 { display: flex; align-items: center; height: 56px; padding-bottom: 6px; font: 24px/34px "Liberation Serif", "Noto Sans CJK SC", serif; }
.hn { font: 28px/34px "Noto Sans CJK SC", sans-serif; }
.dot { width: 6px; height: 6px; background: #000; margin: 0 5px 0 -11px; }
.ret { display: inline-block; width: 8px; height: 8px; margin-left: 8px; }
.blank .ret, h3 .ret { margin-left: 2px; }
.mk { display: inline-block; width: 43px; }
.mk svg { display: inline-block; }
/* Full-width colons and commas sit in the middle of their cell */
.pu { font-family: "Noto Sans CJK JP", sans-serif; }
.pc { font-family: "Noto Sans CJK SC", sans-serif; }
.pu, .pc { line-height: 1; }
u { text-decoration: underline wavy #c00 1px; text-underline-offset: 5px; text-decoration-skip-ink: none; }
.gr { text-decoration-color: #2f6fd0; }

.vscroll { width: 27px; display: flex; flex-direction: column; background: #dfdfdf; padding: 0 2px 1px 0; }
.vscroll button { height: 24px; background: #fff; border: 1px solid #c0c0c0; display: grid; place-items: center; }
.thumb { height: 54px; background: #fff; border: 1px solid #c0c0c0; margin: 136px 0 auto; }

/* Floating input-method bar */
.ime {
  position: absolute;
  right: 4px;
  top: 27px;
  width: 190px;
  height: 34px;
  background: #7b847a;
  border: 2px solid #8d8468;
  outline: 2px solid #e0d0a4;
  outline-offset: -4px;
  display: flex;
  align-items: center;
  justify-content: space-between;
  padding: 0 10px 0 16px;
  color: #bfc5bd;
}
.flower { position: absolute; left: -10px; bottom: -5px; }

/* Status bar */
.status { height: 33px; background: #f0f0f0; border-top: 1px solid #b8b8b8; display: flex; align-items: center; padding: 0 9px 0 7px; color: #555; }
.status > span { margin-bottom: 2px; }
.status .wc { margin: 0 24px 2px; }
.book { margin-right: 20px; }
.views { display: flex; margin-left: auto; align-self: stretch; }
.views button { width: 45px; display: grid; place-items: center; }
.cur { background: #c8c8c8; }
.zb { margin: 0 5px; }
.zoom { appearance: none; width: 150px; height: 18px; margin: 0; background: linear-gradient(#999, #999) center / 100% 2px no-repeat; }
.zoom::-webkit-slider-thumb { appearance: none; width: 6px; height: 17px; background: #666; }
.pct { width: 60px; text-align: right; }

/* Task bar */
.taskbar { height: 46px; background: #102a34; display: flex; align-items: center; color: #fff; }
.k { width: 54px; display: grid; place-items: center; }
.apps { display: flex; gap: 2px; margin-left: 4px; align-self: stretch; }
.app { width: 55px; display: grid; place-items: center; background: linear-gradient(#92d3ea, #92d3ea) bottom / 43px 3px no-repeat; }
.act { background-color: #20506a; background-size: 55px 3px; }
.tray { display: flex; gap: 14px; margin-left: auto; }
.tray svg { width: 22px; height: 22px; }
.sg { margin: 0 29px 0 25px; }
time { width: 46px; font-size: 18px; }
.note { margin: 0 31px 0 30px; }
.taskbar::after { content: ""; align-self: stretch; width: 6px; border-left: 1px solid #50626a; }
```
